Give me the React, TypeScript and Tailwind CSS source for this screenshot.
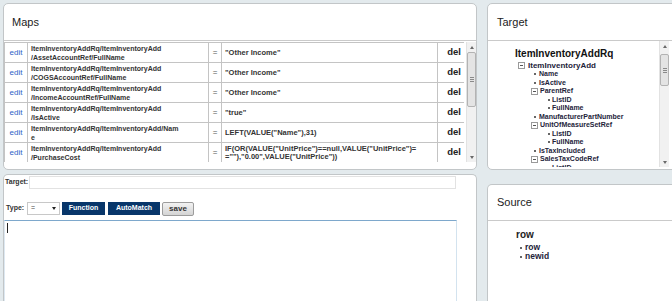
import React from "react";

const FONT = { fontFamily: '"Liberation Sans", Arial, sans-serif' };

function Scrollbar({ thumb }: { thumb: "maps" | "target" }) {
  return (
    <div className="flex h-full w-[10px] flex-col border-l border-[#e2e2e2] bg-[#f1f1f1]">
      <div className="flex h-[10px] items-center justify-center">
        <div className="h-0 w-0 border-x-[2px] border-b-[3px] border-x-transparent border-b-[#6a6a6a]" />
      </div>
      {thumb === "maps" ? (
        <div className="flex h-[55px] flex-col items-center justify-center gap-[1px] rounded-[2px] border border-[#b3b3b3] bg-[#e4e4e4]">
          <div className="h-[1px] w-[4px] bg-[#8a8a8a]" />
          <div className="h-[1px] w-[4px] bg-[#8a8a8a]" />
          <div className="h-[1px] w-[4px] bg-[#8a8a8a]" />
        </div>
      ) : (
        <div className="mt-[3px] flex h-[32px] flex-col items-center justify-center gap-[1px] rounded-[2px] border border-[#b3b3b3] bg-[#e4e4e4]">
          <div className="h-[1px] w-[4px] bg-[#8a8a8a]" />
          <div className="h-[1px] w-[4px] bg-[#8a8a8a]" />
          <div className="h-[1px] w-[4px] bg-[#8a8a8a]" />
        </div>
      )}
      <div className="flex-1" />
      <div className="flex h-[10px] items-center justify-center">
        <div className="h-0 w-0 border-x-[2px] border-t-[3px] border-x-transparent border-t-[#6a6a6a]" />
      </div>
    </div>
  );
}

type Row = { path: React.ReactNode; value: React.ReactNode };

const rows: Row[] = [
  { path: <>ItemInventoryAddRq/ItemInventoryAdd<br />/AssetAccountRef/FullName</>, value: '"Other Income"' },
  { path: <>ItemInventoryAddRq/ItemInventoryAdd<br />/COGSAccountRef/FullName</>, value: '"Other Income"' },
  { path: <>ItemInventoryAddRq/ItemInventoryAdd<br />/IncomeAccountRef/FullName</>, value: '"Other Income"' },
  { path: <>ItemInventoryAddRq/ItemInventoryAdd<br />/IsActive</>, value: '"true"' },
  { path: <>ItemInventoryAddRq/ItemInventoryAdd/Nam<br />e</>, value: 'LEFT(VALUE("Name"),31)' },
  {
    path: <>ItemInventoryAddRq/ItemInventoryAdd<br />/PurchaseCost</>,
    value: <>IF(OR(VALUE("UnitPrice")==null,VALUE("UnitPrice")=<br />=""),"0.00",VALUE("UnitPrice"))</>,
  },
];

function MapRow({ r }: { r: Row }) {
  return (
    <div className="flex h-[20px] shrink-0 border-b border-[#c4c4c4]">
      <div className="flex w-[23px] shrink-0 items-center justify-center border-r border-[#c4c4c4] text-[8px] text-[#2d62c6]">edit</div>
      <div className="flex w-[181px] shrink-0 items-center border-r border-[#c4c4c4] pl-[3px] text-[7px] font-bold leading-[9px] text-[#333]">
        <div>{r.path}</div>
      </div>
      <div className="flex w-[13px] shrink-0 items-center justify-center border-r border-[#c4c4c4] text-[8px] text-[#555]">=</div>
      <div className="flex w-[216px] shrink-0 items-center border-r border-[#c4c4c4] pl-[3px] text-[7.5px] font-bold leading-[8px] text-[#333]">
        <div>{r.value}</div>
      </div>
      <div className="flex w-[26px] shrink-0 items-center justify-end pr-[3px] text-[9.5px] font-bold text-[#222]">del</div>
    </div>
  );
}

function Box() {
  return (
    <div className="flex h-[7px] w-[7px] shrink-0 items-center justify-center border border-[#9a9a9a] bg-white">
      <div className="h-[1px] w-[3px] bg-[#555]" />
    </div>
  );
}

function Dot() {
  return <div className="h-[2px] w-[2px] rounded-full bg-[#333]" />;
}

function L2({ label }: { label: string }) {
  return (
    <div className="flex h-[8.5px] items-center pl-[46px] text-[7px] font-bold leading-[8.5px] text-[#23233a]">
      <div className="w-[5px]"><Dot /></div>
      <span>{label}</span>
    </div>
  );
}

function L2Box({ label }: { label: string }) {
  return (
    <div className="flex h-[8.5px] items-center gap-[2px] pl-[43px] text-[7px] font-bold leading-[8.5px] text-[#23233a]">
      <Box />
      <span>{label}</span>
    </div>
  );
}

function L3({ label }: { label: string }) {
  return (
    <div className="flex h-[8.5px] items-center pl-[60px] text-[7px] font-bold leading-[8.5px] text-[#23233a]">
      <div className="w-[4px]"><Dot /></div>
      <span>{label}</span>
    </div>
  );
}

export default function App() {
  return (
    <div style={FONT} className="flex h-[301px] w-[672px] gap-[10px] overflow-hidden bg-[#e3eaed] pl-[3px] pt-[3px]">
      {/* Left column */}
      <div className="flex w-[474px] shrink-0 flex-col gap-[4px]">
        {/* Maps panel */}
        <div className="flex h-[167px] shrink-0 flex-col overflow-hidden rounded-[5px] border border-[#c2c6c8] bg-white">
          <div className="flex h-[37px] shrink-0 items-center border-b border-[#cacaca] pl-[8px] text-[11px] text-[#222]">Maps</div>
          <div className="flex h-[121px] shrink-0 gap-[2px] pt-[1px]">
            <div className="flex h-full w-[460px] flex-col overflow-hidden border-l border-t border-[#c4c4c4]">
              {rows.map((r, i) => (
                <MapRow key={i} r={r} />
              ))}
            </div>
            <Scrollbar thumb="maps" />
          </div>
        </div>

        {/* Editor panel */}
        <div className="flex flex-1 flex-col rounded-t-[5px] border border-b-0 border-[#c2c6c8] bg-white pt-[1px]">
          <div className="flex h-[13px] items-center">
            <div className="w-[25px] pl-[1px] text-[7px] font-bold text-[#333]">Target:</div>
            <div className="h-[13px] w-[427px] border border-[#e2e2e2] bg-white" />
          </div>
          <div className="mt-[12px] flex h-[15px] items-center gap-[2px] pl-[2px]">
            <div className="w-[19px] text-[7px] font-bold text-[#333]">Type:</div>
            <div className="flex h-[13px] w-[33px] items-center justify-between border border-[#c8c8c8] bg-white pl-[3px] pr-[3px] text-[7px] text-[#444]">
              <span>=</span>
              <div className="h-0 w-0 border-x-[2.5px] border-t-[3px] border-x-transparent border-t-[#222]" />
            </div>
            <div className="flex h-[13px] w-[43px] items-center justify-center bg-[#08366a] text-[7px] font-bold text-white">Function</div>
            <div className="ml-[1px] flex h-[13px] w-[52px] items-center justify-center bg-[#08366a] text-[7px] font-bold text-white">AutoMatch</div>
            <div className="flex h-[14px] w-[32px] items-center justify-center rounded-[2px] border border-[#9c9c9c] bg-gradient-to-b from-[#f2f2f2] to-[#d4d4d4] text-[8px] font-bold text-[#333]">save</div>
          </div>
          <div className="mt-[4px] flex-1">
            <div className="h-full w-[453px] border-l border-r border-t border-l-[#dde8f1] border-r-[#d3e3ef] border-t-[#7ea8cc] pl-[2px] pt-[2px]">
              <div className="h-[10px] w-[1px] bg-[#222]" />
            </div>
          </div>
        </div>
      </div>

      {/* Right column */}
      <div className="flex w-[200px] shrink-0 flex-col gap-[14px]">
        {/* Target panel */}
        <div className="flex h-[167px] shrink-0 flex-col overflow-hidden rounded-[5px] border border-[#c2c6c8] bg-white">
          <div className="flex h-[37px] shrink-0 items-center border-b border-[#cacaca] pl-[9px] text-[11px] text-[#222]">Target</div>
          <div className="flex h-[126px] shrink-0">
            <div className="w-[171px] overflow-hidden pt-[7px]">
              <div className="h-[12px] pl-[27px] text-[10px] font-bold leading-[12px] text-[#111]">ItemInventoryAddRq</div>
              <div className="mt-[1px] flex h-[9px] items-center gap-[3px] pl-[30px] text-[8px] font-bold leading-[9px] text-[#23233a]">
                <Box />
                <span>ItemInventoryAdd</span>
              </div>
              <L2 label="Name" />
              <L2 label="IsActive" />
              <L2Box label="ParentRef" />
              <L3 label="ListID" />
              <L3 label="FullName" />
              <L2 label="ManufacturerPartNumber" />
              <L2Box label="UnitOfMeasureSetRef" />
              <L3 label="ListID" />
              <L3 label="FullName" />
              <L2 label="IsTaxIncluded" />
              <L2Box label="SalesTaxCodeRef" />
              <L3 label="ListID" />
            </div>
            <Scrollbar thumb="target" />
          </div>
        </div>

        {/* Source panel */}
        <div className="flex flex-1 flex-col rounded-t-[5px] border border-b-0 border-[#c2c6c8] bg-white">
          <div className="flex h-[36px] shrink-0 items-center border-b border-[#cacaca] pl-[9px] text-[11px] text-[#222]">Source</div>
          <div className="pt-[8px]">
            <div className="h-[12px] pl-[28px] text-[10px] font-bold leading-[12px] text-[#222]">row</div>
            <div className="mt-[2px] flex h-[9px] items-center pl-[32px] text-[8.5px] font-bold leading-[9px] text-[#23233a]">
              <div className="w-[5px]"><Dot /></div>
              <span>row</span>
            </div>
            <div className="flex h-[9px] items-center pl-[32px] text-[8.5px] font-bold leading-[9px] text-[#23233a]">
              <div className="w-[5px]"><Dot /></div>
              <span>newid</span>
            </div>
          </div>
        </div>
      </div>
    </div>
  );
}
